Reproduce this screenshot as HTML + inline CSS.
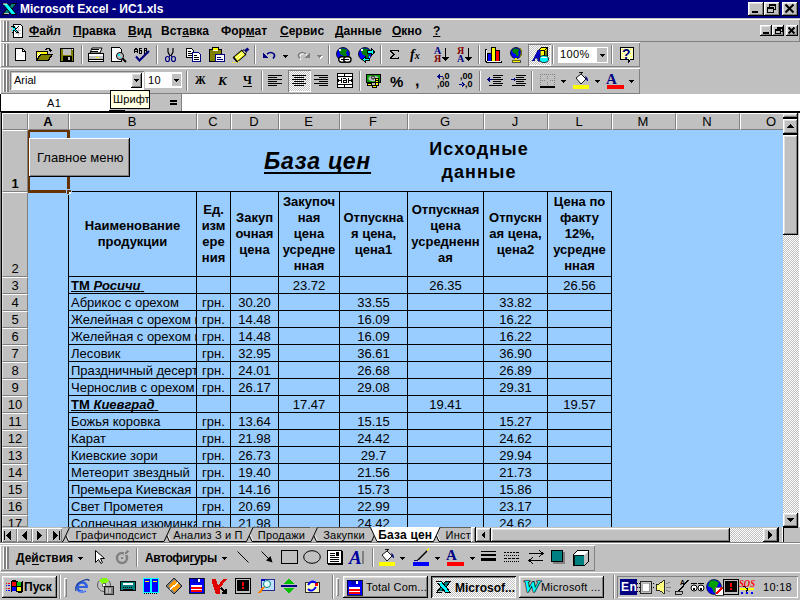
<!DOCTYPE html><html><head><meta charset="utf-8"><style>
*,*:before,*:after{margin:0;padding:0;box-sizing:border-box}
html,body{width:800px;height:600px;overflow:hidden;background:#c0c0c0;font-family:"Liberation Sans",sans-serif;position:relative}
div{position:absolute}
.t{white-space:nowrap;line-height:1;text-decoration-skip-ink:none}
.rb{background:#c0c0c0;box-shadow:inset -1px -1px #000,inset 1px 1px #fff,inset -2px -2px #808080,inset 2px 2px #dfdfdf}
.sk{box-shadow:inset 1px 1px #808080,inset -1px -1px #fff,inset 2px 2px #000,inset -2px -2px #dfdfdf}
.tb{box-shadow:inset 1px 1px #fff,inset -1px -1px #808080}
.grip{width:6px}.grip:before,.grip:after{content:"";position:absolute;top:0;bottom:0;width:3px;border-left:1px solid #fff;border-right:2px solid #808080}.grip:before{left:0}.grip:after{left:3px}
.sep{width:2px;border-left:1px solid #808080;border-right:1px solid #fff}
svg{position:absolute;overflow:visible}
</style></head><body>
<div style="left:0px;top:0px;width:800px;height:18px;background:#000080"></div>
<svg style="left:1px;top:2px" width="17" height="14" viewBox="0 0 17 14"><path d="M10.5 1.5H15.5L6.5 12.5H1.5Z" fill="#008080" stroke="#000"/><path d="M3 11.5H8" stroke="#c0c0c0"/><path d="M1.5 1.5H6.5L15.5 12.5H10.5Z" fill="#00ffff" stroke="#000"/><path d="M2 2H6" stroke="#fff"/></svg>
<div class="t" style="left:20px;top:3px;color:#fff;font-weight:bold;font-size:12px">Microsoft Excel - ИС1.xls</div>
<div class="rb" style="left:748px;top:2px;width:16px;height:14px;"></div>
<div style="left:752px;top:11px;width:6px;height:2px;background:#000"></div>
<div class="rb" style="left:764px;top:2px;width:16px;height:14px;"></div>
<div style="left:769px;top:4px;width:7px;height:6px;border:1px solid #000;border-top-width:2px"></div>
<div style="left:767px;top:7px;width:7px;height:6px;border:1px solid #000;border-top-width:2px;background:#c0c0c0"></div>
<div class="rb" style="left:782px;top:2px;width:16px;height:14px;"></div>
<svg style="left:785px;top:4px" width="9" height="9" viewBox="0 0 9 9"><path d="M0.5 0.5L8.5 8.5M8.5 0.5L0.5 8.5" stroke="#000" stroke-width="2"/></svg>
<div style="left:0px;top:18px;width:800px;height:1px;background:#c0c0c0"></div>
<div class="tb" style="left:0px;top:19px;width:800px;height:23px;"></div>
<div class="grip" style="left:3px;top:21px;width:6px;height:20px;"></div>
<svg style="left:11px;top:24px" width="13" height="14" viewBox="0 0 13 14" shape-rendering="crispEdges"><path d="M2.5 0.5h7l2 2v11h-9z" fill="#fff" stroke="#000"/><path d="M4 6h6M4 9h6M7 4v8" stroke="#c0c0c0"/><path d="M0 2h3l2 2 2-2h1l-3 4 3 3H5L3 7 1 9H0l3-3z" fill="#000"/><path d="M1 3l5 5M1 7l4-4" stroke="#00ffff"/></svg>
<div class="t" style="left:29px;top:25px;font-size:12px;font-weight:bold;color:#000"><u style="text-underline-offset:1px">Ф</u>айл</div>
<div class="t" style="left:73px;top:25px;font-size:12px;font-weight:bold;color:#000"><u style="text-underline-offset:1px">П</u>равка</div>
<div class="t" style="left:128px;top:25px;font-size:12px;font-weight:bold;color:#000"><u style="text-underline-offset:1px">В</u>ид</div>
<div class="t" style="left:161px;top:25px;font-size:12px;font-weight:bold;color:#000">Вст<u style="text-underline-offset:1px">а</u>вка</div>
<div class="t" style="left:221px;top:25px;font-size:12px;font-weight:bold;color:#000">Фор<u style="text-underline-offset:1px">м</u>ат</div>
<div class="t" style="left:280px;top:25px;font-size:12px;font-weight:bold;color:#000"><u style="text-underline-offset:1px">С</u>ервис</div>
<div class="t" style="left:335px;top:25px;font-size:12px;font-weight:bold;color:#000"><u style="text-underline-offset:1px">Д</u>анные</div>
<div class="t" style="left:392px;top:25px;font-size:12px;font-weight:bold;color:#000"><u style="text-underline-offset:1px">О</u>кно</div>
<div class="t" style="left:433px;top:25px;font-size:12px;font-weight:bold;color:#000"><u style="text-underline-offset:1px">?</u></div>
<div class="rb" style="left:760px;top:25px;width:12px;height:11px;"></div>
<div style="left:763px;top:32px;width:6px;height:2px;background:#000"></div>
<div class="rb" style="left:772px;top:25px;width:12px;height:11px;"></div>
<div style="left:777px;top:27px;width:6px;height:5px;border:1px solid #000;border-top-width:2px"></div>
<div style="left:775px;top:29px;width:6px;height:5px;border:1px solid #000;border-top-width:2px;background:#c0c0c0"></div>
<div class="rb" style="left:786px;top:25px;width:12px;height:11px;"></div>
<svg style="left:788px;top:27px" width="7" height="7" viewBox="0 0 7 7"><path d="M0.5 0.5L6.5 6.5M6.5 0.5L0.5 6.5" stroke="#000" stroke-width="2"/></svg>
<div class="tb" style="left:0px;top:42px;width:640px;height:25px;"></div>
<div class="grip" style="left:3px;top:44px;width:6px;height:22px;"></div>
<div class="tb" style="left:0px;top:68px;width:640px;height:26px;"></div>
<div class="grip" style="left:3px;top:70px;width:6px;height:22px;"></div>
<div style="left:81px;top:45px;width:1px;height:19px;background:#808080"></div>
<div style="left:82px;top:45px;width:1px;height:19px;background:#fff"></div>
<div style="left:156px;top:45px;width:1px;height:19px;background:#808080"></div>
<div style="left:157px;top:45px;width:1px;height:19px;background:#fff"></div>
<div style="left:254px;top:45px;width:1px;height:19px;background:#808080"></div>
<div style="left:255px;top:45px;width:1px;height:19px;background:#fff"></div>
<div style="left:328px;top:45px;width:1px;height:19px;background:#808080"></div>
<div style="left:329px;top:45px;width:1px;height:19px;background:#fff"></div>
<div style="left:380px;top:45px;width:1px;height:19px;background:#808080"></div>
<div style="left:381px;top:45px;width:1px;height:19px;background:#fff"></div>
<div style="left:478px;top:45px;width:1px;height:19px;background:#808080"></div>
<div style="left:479px;top:45px;width:1px;height:19px;background:#fff"></div>
<div style="left:552px;top:45px;width:1px;height:19px;background:#808080"></div>
<div style="left:553px;top:45px;width:1px;height:19px;background:#fff"></div>
<div style="left:611px;top:45px;width:1px;height:19px;background:#808080"></div>
<div style="left:612px;top:45px;width:1px;height:19px;background:#fff"></div>
<svg style="left:15px;top:48px;" width="11" height="13" viewBox="0 0 11 13" shape-rendering="crispEdges"><path d="M0.5 0.5H7.5L10.5 3.5V12.5H0.5Z" fill="#fff" stroke="#000"/><path d="M7.5 0.5V3.5H10.5" fill="none" stroke="#000"/></svg>
<svg style="left:36px;top:47px;" width="17" height="14" viewBox="0 0 17 14" shape-rendering="crispEdges"><path d="M9 3V2h1V1h3v1h1v1h1v1" fill="none" stroke="#000" stroke-width="1"/><path d="M13 3h3v1h-1v1h-1v-1h-1z" fill="#000"/><rect x="0" y="4" width="12" height="10" fill="#000"/><rect x="1" y="5" width="10" height="8" fill="#ffff00"/><path d="M2 6h1v1h-1zM4 6h1v1h-1zM1 7h1v1h-1zM3 7h1v1h-1zM2 8h1v1h-1zM1 9h1v1h-1z" fill="#fff"/><path d="M0 13L4 7H17L13 14H0Z" fill="#000"/><path d="M2 13L5 8H15L12 13Z" fill="#808000"/></svg>
<svg style="left:60px;top:48px;" width="15" height="14" viewBox="0 0 15 14" shape-rendering="crispEdges"><rect x="0" y="0" width="14" height="14" fill="#000"/><rect x="1" y="1" width="12" height="12" fill="#808000"/><rect x="3" y="1" width="8" height="6" fill="#c0c0c0"/><rect x="3" y="8" width="9" height="6" fill="#000"/><rect x="8" y="9" width="2" height="3" fill="#c0c0c0"/><rect x="12" y="1" width="1" height="1" fill="#fff"/></svg>
<svg style="left:88px;top:47px;" width="17" height="15" viewBox="0 0 17 15" shape-rendering="crispEdges"><path d="M4 1H14L12 6H2Z" fill="#fff" stroke="#000" stroke-width="1" shape-rendering="auto"/><rect x="4" y="2" width="7" height="1" fill="#000"/><rect x="3" y="4" width="7" height="1" fill="#000"/><rect x="0" y="6" width="16" height="9" rx="1" fill="#000"/><rect x="1" y="7" width="14" height="2" fill="#fff"/><rect x="1" y="9" width="14" height="3" fill="#c0c0c0"/><rect x="8" y="10" width="3" height="1" fill="#ffff00"/><rect x="1" y="13" width="14" height="1" fill="#fff"/></svg>
<svg style="left:111px;top:47px;" width="17" height="16" viewBox="0 0 17 16" shape-rendering="crispEdges"><path d="M0.5 0.5H8.5L10.5 2.5V14.5H0.5Z" fill="#fff" stroke="#000"/><circle cx="9" cy="9" r="3.5" fill="#c0c0c0" stroke="#000" shape-rendering="auto"/><rect x="7" y="7" width="2" height="2" fill="#00ffff"/><rect x="9" y="10" width="1" height="1" fill="#00ffff"/><path d="M11.5 11.5L15 15" stroke="#000" stroke-width="2" shape-rendering="auto"/></svg>
<svg style="left:134px;top:48px;" width="13" height="6" viewBox="0 0 13 6" shape-rendering="crispEdges"><path d="M0 5V1h1V0h1v1h1v4M0 3h3" fill="none" stroke="#000"/><path d="M5 0.5h3M5.5 0v5M5 2.5h2.5v2.5H5" fill="none" stroke="#000"/><path d="M10.5 0v5M10 0.5h2v2h-2M10 2.5h2.5v2.5H10" fill="none" stroke="#000"/></svg>
<svg style="left:135px;top:50px;" width="15" height="12" viewBox="0 0 15 12" shape-rendering="crispEdges"><path d="M1 6.5L4.5 10.5L14 1" fill="none" stroke="#000080" stroke-width="2.2" shape-rendering="auto"/></svg>
<svg style="left:165px;top:48px;" width="11" height="14" viewBox="0 0 11 14" shape-rendering="crispEdges"><path d="M3 0V4L5 8M8 0V4L6 8" fill="none" stroke="#000" stroke-width="1.2" shape-rendering="auto"/><ellipse cx="2.5" cy="11" rx="2" ry="2.5" fill="none" stroke="#000080" stroke-width="1.2" shape-rendering="auto"/><ellipse cx="8.5" cy="11" rx="2" ry="2.5" fill="none" stroke="#000080" stroke-width="1.2" shape-rendering="auto"/><path d="M4 9L5.5 7.5L7 9" stroke="#000080" fill="none"/></svg>
<svg style="left:186px;top:48px;" width="16" height="14" viewBox="0 0 16 14" shape-rendering="crispEdges"><path d="M0.5 0.5H5.5L7.5 2.5V9.5H0.5Z" fill="#fff" stroke="#000"/><rect x="2" y="3" width="3" height="1" fill="#000"/><rect x="2" y="5" width="4" height="1" fill="#000"/><rect x="2" y="7" width="4" height="1" fill="#000"/><path d="M6.5 4.5H12.5L14.5 6.5V13.5H6.5Z" fill="#fff" stroke="#000080"/><rect x="8" y="7" width="3" height="1" fill="#000"/><rect x="8" y="9" width="5" height="1" fill="#000"/><rect x="8" y="11" width="5" height="1" fill="#000"/></svg>
<svg style="left:209px;top:47px;" width="17" height="15" viewBox="0 0 17 15" shape-rendering="crispEdges"><rect x="0" y="2" width="13" height="13" fill="#000"/><rect x="1" y="3" width="11" height="11" fill="#808000"/><rect x="3" y="0" width="7" height="3" fill="#000"/><rect x="4" y="1" width="5" height="2" fill="#ffff00"/><rect x="4" y="3" width="5" height="1" fill="#fff"/><rect x="6" y="7" width="10" height="8" fill="#000080"/><rect x="7" y="8" width="8" height="6" fill="#fff"/><rect x="8" y="10" width="4" height="1" fill="#000080"/><rect x="8" y="12" width="6" height="1" fill="#000080"/></svg>
<svg style="left:232px;top:47px;" width="17" height="16" viewBox="0 0 17 16" shape-rendering="crispEdges"><g transform="rotate(-40 8 8)" shape-rendering="auto"><rect x="1.5" y="5.5" width="11" height="6" fill="#ffff00" stroke="#000"/><path d="M2 7.5H12M2 9.5H12" stroke="#fff" stroke-width="0.9"/><rect x="12.5" y="6.5" width="2" height="4" fill="#c0c0c0" stroke="#000" stroke-width="0.8"/><rect x="14.5" y="7" width="4" height="3" fill="#000080"/><path d="M1.5 5.5V11.5" stroke="#000" stroke-width="1.6"/></g><path d="M0 15h1M2 15h1M4 15h1M6 14h1" stroke="#ffff00"/></svg>
<svg style="left:263px;top:51px;" width="13" height="8" viewBox="0 0 13 8" shape-rendering="crispEdges"><path d="M4 3Q8 0 11 3Q12.5 5 10 7.5" fill="none" stroke="#000080" stroke-width="1.6" shape-rendering="auto"/><path d="M0 1V7H5Z" fill="#000080"/></svg>
<svg style="left:283px;top:55px;" width="5" height="3" viewBox="0 0 5 3" shape-rendering="crispEdges"><path d="M0 0h5v1h-1v1h-1v1h-1v-1h-1v-1h-1z" fill="#000"/></svg>
<svg style="left:297px;top:51px;" width="14" height="8" viewBox="0 0 14 8" shape-rendering="crispEdges"><path d="M9 3Q5 0 2 3Q0.5 5 3 7.5" fill="none" stroke="#fff" stroke-width="1.6" shape-rendering="auto" transform="translate(1,1)"/><path d="M9 3Q5 0 2 3Q0.5 5 3 7.5" fill="none" stroke="#808080" stroke-width="1.6" shape-rendering="auto"/><path d="M13 1V7H8Z" fill="#808080"/></svg>
<svg style="left:318px;top:56px;" width="5" height="3" viewBox="0 0 5 3" shape-rendering="crispEdges"><path d="M0 0h5v1h-1v1h-1v1h-1v-1h-1v-1h-1z" fill="#fff"/></svg>
<svg style="left:317px;top:55px;" width="5" height="3" viewBox="0 0 5 3" shape-rendering="crispEdges"><path d="M0 0h5v1h-1v1h-1v1h-1v-1h-1v-1h-1z" fill="#808080"/></svg>
<svg style="left:336px;top:47px;" width="14" height="14" viewBox="0 0 14 14" shape-rendering="crispEdges"><circle cx="7" cy="7" r="6.5" fill="#0000ff" stroke="#000" stroke-width="0.8" shape-rendering="auto"/><path d="M5 1.5Q10 1 11.5 3.5L10 5.5L11 8.5L9 12L7 8.5L4.5 7.5L3 4Z" fill="#008000" shape-rendering="auto"/><rect x="3" y="2" width="2" height="2" fill="#fff"/><rect x="11" y="9" width="1" height="2" fill="#00ffff"/></svg>
<svg style="left:338px;top:56px;" width="14" height="7" viewBox="0 0 14 7" shape-rendering="crispEdges"><rect x="0.7" y="0.7" width="7.3" height="5.6" rx="2.8" fill="#fff" stroke="#000" stroke-width="1.4" shape-rendering="auto"/><rect x="5.7" y="0.7" width="7.3" height="5.6" rx="2.8" fill="#fff" stroke="#000" stroke-width="1.4" shape-rendering="auto"/><rect x="3" y="3" width="8" height="1" fill="#000"/></svg>
<svg style="left:358px;top:47px;" width="14" height="14" viewBox="0 0 14 14" shape-rendering="crispEdges"><circle cx="7" cy="7" r="6.5" fill="#0000ff" stroke="#000" stroke-width="0.8" shape-rendering="auto"/><path d="M5 1.5Q10 1 11.5 3.5L10 5.5L11 8.5L9 12L7 8.5L4.5 7.5L3 4Z" fill="#008000" shape-rendering="auto"/><rect x="3" y="2" width="2" height="2" fill="#fff"/><rect x="11" y="9" width="1" height="2" fill="#00ffff"/></svg>
<svg style="left:362px;top:48px;" width="13" height="15" viewBox="0 0 13 15" shape-rendering="crispEdges"><path d="M5.5 2.5H9.5V0.5L12.5 4L9.5 7.5V5.5H5.5Z" fill="#00ffff" stroke="#000" stroke-width="1"/><path d="M7.5 10.5H3.5V8.5L0.5 11.5L3.5 14.5V12.5H7.5Z" fill="#00ffff" stroke="#000" stroke-width="1"/></svg>
<svg style="left:390px;top:50px;" width="10" height="9" viewBox="0 0 10 9" shape-rendering="crispEdges"><path d="M0 0H9V2H8V1H2L5 4.5L2 8H8V7H9V9H0V8L3 4.5L0 1Z" fill="#000"/></svg>
<div class="t" style="left:410px;top:48px;font-family:'Liberation Serif',serif;font-size:14px;font-weight:bold;font-style:italic">f<span style="font-size:10px">x</span></div>
<div class="t" style="left:434px;top:47px;font-family:'Liberation Serif',serif;font-size:10px;font-weight:bold;line-height:7px;color:#000080">А</div>
<div class="t" style="left:434px;top:55px;font-family:'Liberation Serif',serif;font-size:10px;font-weight:bold;line-height:7px;color:#800000">Я</div>
<svg style="left:442px;top:48px;" width="7" height="14" viewBox="0 0 7 14" shape-rendering="crispEdges"><rect x="3" y="0" width="1" height="10" fill="#000"/><path d="M0 9H7L3.5 13Z" fill="#000"/></svg>
<div class="t" style="left:457px;top:47px;font-family:'Liberation Serif',serif;font-size:10px;font-weight:bold;line-height:7px;color:#800000">Я</div>
<div class="t" style="left:457px;top:55px;font-family:'Liberation Serif',serif;font-size:10px;font-weight:bold;line-height:7px;color:#000080">А</div>
<svg style="left:465px;top:48px;" width="7" height="14" viewBox="0 0 7 14" shape-rendering="crispEdges"><rect x="3" y="0" width="1" height="10" fill="#000"/><path d="M0 9H7L3.5 13Z" fill="#000"/></svg>
<svg style="left:485px;top:47px;" width="17" height="16" viewBox="0 0 17 16" shape-rendering="crispEdges"><path d="M0 2h1v1H0zM0 4h1v1H0z" fill="#000"/><rect x="0" y="2" width="2" height="13" fill="#000"/><rect x="1" y="3" width="1" height="11" fill="#fff"/><rect x="2" y="6" width="5" height="8" fill="#000"/><rect x="3" y="7" width="3" height="7" fill="#0000ff"/><rect x="6" y="0" width="5" height="14" fill="#000"/><rect x="7" y="1" width="3" height="13" fill="#ffff00"/><rect x="10" y="3" width="5" height="11" fill="#000"/><rect x="11" y="4" width="3" height="10" fill="#ff0000"/><rect x="1" y="14" width="16" height="2" fill="#000"/><rect x="2" y="14" width="14" height="1" fill="#fff"/></svg>
<svg style="left:509px;top:47px;" width="15" height="16" viewBox="0 0 15 16" shape-rendering="crispEdges"><circle cx="7" cy="6" r="5.5" fill="#0000ff" stroke="#000" stroke-width="0.8" shape-rendering="auto"/><path d="M5 1.5Q9 1 10.5 3L9 5L10 7.5L8 10L6.5 7L4 6L3 3.5Z" fill="#008000" shape-rendering="auto"/><path d="M11 1Q14 5 11 10" fill="none" stroke="#808000" stroke-width="1.2" shape-rendering="auto"/><rect x="6" y="11" width="2" height="2" fill="#ffff00"/><rect x="3" y="13" width="8" height="2" fill="#ffff00" stroke="#000" stroke-width="0.6"/></svg>
<div style="left:528px;top:44px;width:23px;height:22px;background-color:#fff;background-image:linear-gradient(45deg,#c0c0c0 25%,transparent 25%,transparent 75%,#c0c0c0 75%),linear-gradient(45deg,#c0c0c0 25%,transparent 25%,transparent 75%,#c0c0c0 75%);background-size:2px 2px;background-position:0 0,1px 1px;box-shadow:inset 1px 1px #808080,inset -1px -1px #fff"></div>
<svg style="left:532px;top:47px;" width="17" height="16" viewBox="0 0 17 16" shape-rendering="crispEdges"><path d="M6.5 3.5L9.5 0.5H15.5V8.5L12.5 11.5H6.5Z" fill="#ffff00" stroke="#000"/><path d="M6.5 3.5H12.5V11.5M12.5 3.5L15.5 0.5" fill="none" stroke="#000"/><path d="M13 4L15 2V8L13 10Z" fill="#808000"/><path d="M0.5 13.5L6 3H8.5L8 14H5.5L5.7 11H3.5L2.5 13.5Z" fill="#0000c0" stroke="#000080" stroke-width="0.6"/><ellipse cx="12" cy="12" rx="4.5" ry="3.5" fill="#00ffff" stroke="#000" stroke-width="0.8" shape-rendering="auto"/><path d="M9 11Q12 9 15 11" stroke="#fff" fill="none"/></svg>
<div style="left:557px;top:46px;width:51px;height:18px;background:#c0c0c0"></div>
<div style="left:558px;top:47px;width:50px;height:16px;background:#fff"></div>
<div class="t" style="left:560px;top:49px;font-size:11px;letter-spacing:0.4px">100%</div>
<div style="left:597px;top:48px;width:10px;height:14px;background:#c0c0c0"></div>
<svg style="left:600px;top:54px;" width="5" height="3" viewBox="0 0 5 3" shape-rendering="crispEdges"><path d="M0 0h5v1h-1v1h-1v1h-1v-1h-1v-1h-1z" fill="#000"/></svg>
<svg style="left:620px;top:47px;" width="14" height="16" viewBox="0 0 14 16" shape-rendering="crispEdges"><path d="M0.5 0.5H13.5V12.5H10.5L8.5 15V12.5H0.5Z" fill="#ffffc0" stroke="#000"/><path d="M2 2h1M6 2h1M10 2h1M4 4h1M2 6h1M10 6h1M2 10h1M11 9h1" stroke="#ffff00"/><path d="M1 1h1v1H1zM3 1h1v1H3z" fill="#fff"/></svg>
<div class="t" style="left:622px;top:47px;font-family:'Liberation Sans',sans-serif;font-size:14px;font-weight:bold;color:#000080">?</div>
<div style="left:10px;top:71px;width:134px;height:19px;background:#fff;box-shadow:inset 1px 1px #808080,inset -1px -1px #fff, inset 2px 2px #c0c0c0"></div>
<div class="t" style="left:14px;top:75px;font-size:11px">Arial</div>
<div class="rb" style="left:131px;top:73px;width:11px;height:15px;"></div>
<svg style="left:134px;top:79px;" width="5" height="3" viewBox="0 0 5 3" shape-rendering="crispEdges"><path d="M0 0h5v1h-1v1h-1v1h-1v-1h-1v-1h-1z" fill="#000"/></svg>
<div style="left:145px;top:72px;width:37px;height:16px;background:#fff"></div>
<div class="t" style="left:148px;top:75px;font-size:11px;letter-spacing:0.5px">10</div>
<div style="left:172px;top:74px;width:9px;height:12px;background:#c0c0c0"></div>
<svg style="left:174px;top:79px;" width="5" height="3" viewBox="0 0 5 3" shape-rendering="crispEdges"><path d="M0 0h5v1h-1v1h-1v1h-1v-1h-1v-1h-1z" fill="#000"/></svg>
<div style="left:186px;top:71px;width:1px;height:20px;background:#808080"></div>
<div style="left:187px;top:71px;width:1px;height:20px;background:#fff"></div>
<div style="left:261px;top:71px;width:1px;height:20px;background:#808080"></div>
<div style="left:262px;top:71px;width:1px;height:20px;background:#fff"></div>
<div style="left:359px;top:71px;width:1px;height:20px;background:#808080"></div>
<div style="left:360px;top:71px;width:1px;height:20px;background:#fff"></div>
<div style="left:479px;top:71px;width:1px;height:20px;background:#808080"></div>
<div style="left:480px;top:71px;width:1px;height:20px;background:#fff"></div>
<div style="left:531px;top:71px;width:1px;height:20px;background:#808080"></div>
<div style="left:532px;top:71px;width:1px;height:20px;background:#fff"></div>
<div class="t" style="left:195px;top:74px;font-family:'Liberation Serif',serif;font-size:12px;font-weight:bold;transform:scaleX(0.9);transform-origin:left">Ж</div>
<div class="t" style="left:218px;top:74px;font-family:'Liberation Serif',serif;font-size:13px;font-weight:bold;font-style:italic">К</div>
<div class="t" style="left:243px;top:74px;font-family:'Liberation Serif',serif;font-size:12px;font-weight:bold">Ч</div>
<div style="left:243px;top:86px;width:9px;height:1px;background:#000"></div>
<svg style="left:268px;top:75px;" width="15" height="11" viewBox="0 0 15 11" shape-rendering="crispEdges"><rect x="0" y="0" width="14" height="1" fill="#000"/><rect x="0" y="2" width="9" height="1" fill="#000"/><rect x="0" y="4" width="14" height="1" fill="#000"/><rect x="0" y="6" width="9" height="1" fill="#000"/><rect x="0" y="8" width="14" height="1" fill="#000"/><rect x="0" y="10" width="9" height="1" fill="#000"/></svg>
<div style="left:288px;top:70px;width:23px;height:22px;background-color:#fff;background-image:linear-gradient(45deg,#c0c0c0 25%,transparent 25%,transparent 75%,#c0c0c0 75%),linear-gradient(45deg,#c0c0c0 25%,transparent 25%,transparent 75%,#c0c0c0 75%);background-size:2px 2px;background-position:0 0,1px 1px;box-shadow:inset 1px 1px #808080,inset -1px -1px #fff"></div>
<svg style="left:292px;top:75px;" width="15" height="11" viewBox="0 0 15 11" shape-rendering="crispEdges"><rect x="0" y="0" width="14" height="1" fill="#000"/><rect x="2" y="2" width="10" height="1" fill="#000"/><rect x="0" y="4" width="14" height="1" fill="#000"/><rect x="2" y="6" width="10" height="1" fill="#000"/><rect x="0" y="8" width="14" height="1" fill="#000"/><rect x="2" y="10" width="10" height="1" fill="#000"/></svg>
<svg style="left:314px;top:75px;" width="15" height="11" viewBox="0 0 15 11" shape-rendering="crispEdges"><rect x="0" y="0" width="14" height="1" fill="#000"/><rect x="5" y="2" width="9" height="1" fill="#000"/><rect x="0" y="4" width="14" height="1" fill="#000"/><rect x="5" y="6" width="9" height="1" fill="#000"/><rect x="0" y="8" width="14" height="1" fill="#000"/><rect x="5" y="10" width="9" height="1" fill="#000"/></svg>
<svg style="left:337px;top:73px;" width="16" height="15" viewBox="0 0 16 15" shape-rendering="crispEdges"><rect x="0" y="0" width="16" height="15" fill="#000"/><rect x="1" y="1" width="6" height="2" fill="#fff"/><rect x="8" y="1" width="7" height="2" fill="#fff"/><rect x="1" y="4" width="14" height="7" fill="#fff"/><rect x="1" y="12" width="6" height="2" fill="#fff"/><rect x="8" y="12" width="7" height="2" fill="#fff"/><rect x="1" y="6" width="1" height="3" fill="#000"/><rect x="1" y="7" width="3" height="1" fill="#000"/><rect x="4" y="5" width="1" height="5" fill="#000"/><rect x="6" y="5" width="3" height="1" fill="#000"/><rect x="9" y="6" width="1" height="4" fill="#000"/><rect x="6" y="7" width="3" height="1" fill="#000"/><rect x="6" y="8" width="1" height="1" fill="#000"/><rect x="6" y="9" width="3" height="1" fill="#000"/><rect x="11" y="5" width="1" height="5" fill="#000"/><rect x="12" y="7" width="3" height="1" fill="#000"/><rect x="14" y="6" width="1" height="3" fill="#000"/></svg>
<svg style="left:366px;top:74px;" width="16" height="14" viewBox="0 0 16 14" shape-rendering="crispEdges"><rect x="0" y="0" width="15" height="9" fill="#000"/><rect x="1" y="1" width="13" height="7" fill="#00a000"/><ellipse cx="7.5" cy="4.5" rx="5" ry="2.8" fill="#c0c0c0" shape-rendering="auto"/><circle cx="7" cy="3.5" r="1.6" fill="none" stroke="#000" stroke-width="0.9" shape-rendering="auto"/><rect x="9" y="4" width="4" height="8" fill="#000"/><rect x="10" y="5" width="2" height="1" fill="#ffff00"/><rect x="10" y="7" width="2" height="1" fill="#ffff00"/><rect x="10" y="9" width="2" height="2" fill="#ffff00"/><rect x="1" y="9" width="5" height="3" rx="1.5" fill="#000"/><rect x="2" y="10" width="3" height="1" fill="#ffff00"/><rect x="6" y="11" width="5" height="3" rx="1.5" fill="#000"/><rect x="7" y="12" width="3" height="1" fill="#ffff00"/></svg>
<div class="t" style="left:390px;top:74px;font-size:15px;font-weight:bold">%</div>
<div class="t" style="left:415px;top:73px;font-size:16px;font-weight:bold">,</div>
<div class="t" style="left:442px;top:72px;font-size:9px;font-weight:bold;letter-spacing:0px">,0</div>
<div class="t" style="left:437px;top:80px;font-size:9px;font-weight:bold;letter-spacing:0px">,00</div>
<svg style="left:437px;top:74px;" width="6" height="5" viewBox="0 0 6 5" shape-rendering="crispEdges"><path d="M0 2.5L3 0V5Z M2 2H6V3H2Z" fill="#000080"/></svg>
<div class="t" style="left:460px;top:72px;font-size:9px;font-weight:bold;letter-spacing:0px">,00</div>
<div class="t" style="left:465px;top:80px;font-size:9px;font-weight:bold;letter-spacing:0px">,0</div>
<svg style="left:459px;top:82px;" width="6" height="5" viewBox="0 0 6 5" shape-rendering="crispEdges"><path d="M6 2.5L3 0V5Z M0 2H4V3H0Z" fill="#000080"/></svg>
<svg style="left:487px;top:74px;" width="17" height="13" viewBox="0 0 17 13" shape-rendering="crispEdges"><rect x="6" y="1" width="10" height="1" fill="#000"/><rect x="6" y="3" width="8" height="1" fill="#000"/><rect x="6" y="5" width="10" height="1" fill="#000"/><rect x="6" y="7" width="8" height="1" fill="#000"/><rect x="6" y="9" width="10" height="1" fill="#000"/><rect x="2" y="11" width="13" height="1" fill="#000"/><path d="M6 5H3V3L0 5.5L3 8V6H6Z" fill="#000080"/></svg>
<svg style="left:510px;top:74px;" width="17" height="13" viewBox="0 0 17 13" shape-rendering="crispEdges"><rect x="6" y="1" width="10" height="1" fill="#000"/><rect x="6" y="3" width="8" height="1" fill="#000"/><rect x="6" y="5" width="10" height="1" fill="#000"/><rect x="6" y="7" width="8" height="1" fill="#000"/><rect x="6" y="9" width="10" height="1" fill="#000"/><rect x="2" y="11" width="13" height="1" fill="#000"/><path d="M1 5H4V3L6 5.5L4 8V6H1Z" fill="#000080"/></svg>
<svg style="left:540px;top:74px;" width="15" height="14" viewBox="0 0 15 14" shape-rendering="crispEdges"><path d="M0 0h1v1H0zM2 0h1v1H2zM4 0h1v1H4zM6 0h1v1H6zM8 0h1v1H8zM10 0h1v1h-1zM12 0h1v1h-1zM14 0h1v1h-1zM0 2h1v1H0zM0 4h1v1H0zM0 6h1v1H0zM0 8h1v1H0zM0 10h1v1H0zM14 2h1v1h-1zM14 4h1v1h-1zM14 6h1v1h-1zM14 8h1v1h-1zM14 10h1v1h-1zM7 2h1v1H7zM7 4h1v1H7zM7 8h1v1H7zM7 10h1v1H7zM2 6h1v1H2zM4 6h1v1H4zM10 6h1v1h-1zM12 6h1v1h-1z" fill="#808080"/><rect x="0" y="12" width="15" height="2" fill="#000"/></svg>
<svg style="left:561px;top:80px;" width="5" height="3" viewBox="0 0 5 3" shape-rendering="crispEdges"><path d="M0 0h5v1h-1v1h-1v1h-1v-1h-1v-1h-1z" fill="#000"/></svg>
<svg style="left:573px;top:72px;" width="17" height="18" viewBox="0 0 17 18" shape-rendering="crispEdges"><path d="M3 6L8 2L13 7L8 12Z" fill="#fff" stroke="#000" stroke-width="0.9" shape-rendering="auto"/><path d="M8 2V0M6 1Q8 -1 10 1" fill="none" stroke="#000" stroke-width="0.9"/><path d="M12 4Q15 5 15 9L14 9L13 7Z" fill="#000080" shape-rendering="auto"/><rect x="0" y="13" width="16" height="4" fill="#ffff00"/></svg>
<svg style="left:595px;top:80px;" width="5" height="3" viewBox="0 0 5 3" shape-rendering="crispEdges"><path d="M0 0h5v1h-1v1h-1v1h-1v-1h-1v-1h-1z" fill="#000"/></svg>
<div class="t" style="left:606px;top:72px;font-family:'Liberation Serif',serif;font-size:15px;font-weight:bold;color:#000080">A</div>
<div style="left:607px;top:85px;width:17px;height:4px;background:#ff0000"></div>
<svg style="left:629px;top:80px;" width="5" height="3" viewBox="0 0 5 3" shape-rendering="crispEdges"><path d="M0 0h5v1h-1v1h-1v1h-1v-1h-1v-1h-1z" fill="#000"/></svg>
<div style="left:0px;top:94px;width:800px;height:18px;background:#c0c0c0"></div>
<div style="left:0px;top:94px;width:110px;height:18px;background:#fff;border-left:1px solid #000"></div>
<div class="t" style="left:47px;top:98px;font-size:11px;letter-spacing:0.5px">A1</div>
<div style="left:181px;top:94px;width:619px;height:18px;background:#fff;border-left:1px solid #808080"></div>
<div style="left:170px;top:100px;width:7px;height:2px;background:#000"></div>
<div style="left:170px;top:103px;width:7px;height:2px;background:#000"></div>
<div style="left:0px;top:111px;width:800px;height:2px;background:#000"></div>
<div style="left:0px;top:112px;width:1px;height:416px;background:#808080"></div>
<div style="left:1px;top:112px;width:1px;height:416px;background:#000"></div>
<div style="left:2px;top:113px;width:781px;height:17px;background:#c0c0c0"></div>
<div style="left:2px;top:113px;width:26px;height:17px;border-top:1px solid #fff;border-left:1px solid #fff;border-right:1px solid #808080;border-bottom:1px solid #808080"></div>
<div style="left:0;top:113px;width:783px;height:17px;overflow:hidden">
<div style="left:28px;top:0px;width:41px;height:17px;border-top:1px solid #fff;border-left:1px solid #fff;border-right:1px solid #808080;border-bottom:1px solid #808080"></div>
<div class="t" style="left:28px;top:2px;width:40px;text-align:center;font-size:13px;font-weight:bold">A</div>
<div style="left:69px;top:0px;width:128px;height:17px;border-top:1px solid #fff;border-left:1px solid #fff;border-right:1px solid #808080;border-bottom:1px solid #808080"></div>
<div class="t" style="left:68px;top:2px;width:128px;text-align:center;font-size:13px;font-weight:normal">B</div>
<div style="left:197px;top:0px;width:34px;height:17px;border-top:1px solid #fff;border-left:1px solid #fff;border-right:1px solid #808080;border-bottom:1px solid #808080"></div>
<div class="t" style="left:196px;top:2px;width:34px;text-align:center;font-size:13px;font-weight:normal">C</div>
<div style="left:231px;top:0px;width:48px;height:17px;border-top:1px solid #fff;border-left:1px solid #fff;border-right:1px solid #808080;border-bottom:1px solid #808080"></div>
<div class="t" style="left:230px;top:2px;width:48px;text-align:center;font-size:13px;font-weight:normal">D</div>
<div style="left:279px;top:0px;width:61px;height:17px;border-top:1px solid #fff;border-left:1px solid #fff;border-right:1px solid #808080;border-bottom:1px solid #808080"></div>
<div class="t" style="left:278px;top:2px;width:61px;text-align:center;font-size:13px;font-weight:normal">E</div>
<div style="left:340px;top:0px;width:68px;height:17px;border-top:1px solid #fff;border-left:1px solid #fff;border-right:1px solid #808080;border-bottom:1px solid #808080"></div>
<div class="t" style="left:339px;top:2px;width:68px;text-align:center;font-size:13px;font-weight:normal">F</div>
<div style="left:408px;top:0px;width:76px;height:17px;border-top:1px solid #fff;border-left:1px solid #fff;border-right:1px solid #808080;border-bottom:1px solid #808080"></div>
<div class="t" style="left:407px;top:2px;width:76px;text-align:center;font-size:13px;font-weight:normal">G</div>
<div style="left:484px;top:0px;width:64px;height:17px;border-top:1px solid #fff;border-left:1px solid #fff;border-right:1px solid #808080;border-bottom:1px solid #808080"></div>
<div class="t" style="left:483px;top:2px;width:64px;text-align:center;font-size:13px;font-weight:normal">J</div>
<div style="left:548px;top:0px;width:64px;height:17px;border-top:1px solid #fff;border-left:1px solid #fff;border-right:1px solid #808080;border-bottom:1px solid #808080"></div>
<div class="t" style="left:547px;top:2px;width:64px;text-align:center;font-size:13px;font-weight:normal">L</div>
<div style="left:612px;top:0px;width:64px;height:17px;border-top:1px solid #fff;border-left:1px solid #fff;border-right:1px solid #808080;border-bottom:1px solid #808080"></div>
<div class="t" style="left:611px;top:2px;width:64px;text-align:center;font-size:13px;font-weight:normal">M</div>
<div style="left:676px;top:0px;width:64px;height:17px;border-top:1px solid #fff;border-left:1px solid #fff;border-right:1px solid #808080;border-bottom:1px solid #808080"></div>
<div class="t" style="left:675px;top:2px;width:64px;text-align:center;font-size:13px;font-weight:normal">N</div>
<div style="left:740px;top:0px;width:64px;height:17px;border-top:1px solid #fff;border-left:1px solid #fff;border-right:1px solid #808080;border-bottom:1px solid #808080"></div>
<div class="t" style="left:739px;top:2px;width:64px;text-align:center;font-size:13px;font-weight:normal">O</div>
</div>
<div style="left:28px;top:130px;width:755px;height:397px;background:#99ccff"></div>
<div style="left:2px;top:130px;width:26px;height:62px;background:#c0c0c0;border-top:1px solid #fff;border-left:1px solid #dfdfdf;border-right:1px solid #808080;border-bottom:1px solid #808080"></div>
<div class="t" style="left:2px;top:177px;width:26px;text-align:center;font-size:13px;font-weight:bold">1</div>
<div style="left:2px;top:192px;width:26px;height:85px;background:#c0c0c0;border-top:1px solid #fff;border-left:1px solid #dfdfdf;border-right:1px solid #808080;border-bottom:1px solid #808080"></div>
<div class="t" style="left:2px;top:262px;width:26px;text-align:center;font-size:13px;font-weight:normal">2</div>
<div style="left:2px;top:277px;width:26px;height:17px;background:#c0c0c0;border-top:1px solid #fff;border-left:1px solid #dfdfdf;border-right:1px solid #808080;border-bottom:1px solid #808080"></div>
<div class="t" style="left:2px;top:279px;width:26px;text-align:center;font-size:13px;font-weight:normal">3</div>
<div style="left:2px;top:294px;width:26px;height:17px;background:#c0c0c0;border-top:1px solid #fff;border-left:1px solid #dfdfdf;border-right:1px solid #808080;border-bottom:1px solid #808080"></div>
<div class="t" style="left:2px;top:296px;width:26px;text-align:center;font-size:13px;font-weight:normal">4</div>
<div style="left:2px;top:311px;width:26px;height:17px;background:#c0c0c0;border-top:1px solid #fff;border-left:1px solid #dfdfdf;border-right:1px solid #808080;border-bottom:1px solid #808080"></div>
<div class="t" style="left:2px;top:313px;width:26px;text-align:center;font-size:13px;font-weight:normal">5</div>
<div style="left:2px;top:328px;width:26px;height:17px;background:#c0c0c0;border-top:1px solid #fff;border-left:1px solid #dfdfdf;border-right:1px solid #808080;border-bottom:1px solid #808080"></div>
<div class="t" style="left:2px;top:330px;width:26px;text-align:center;font-size:13px;font-weight:normal">6</div>
<div style="left:2px;top:345px;width:26px;height:17px;background:#c0c0c0;border-top:1px solid #fff;border-left:1px solid #dfdfdf;border-right:1px solid #808080;border-bottom:1px solid #808080"></div>
<div class="t" style="left:2px;top:347px;width:26px;text-align:center;font-size:13px;font-weight:normal">7</div>
<div style="left:2px;top:362px;width:26px;height:17px;background:#c0c0c0;border-top:1px solid #fff;border-left:1px solid #dfdfdf;border-right:1px solid #808080;border-bottom:1px solid #808080"></div>
<div class="t" style="left:2px;top:364px;width:26px;text-align:center;font-size:13px;font-weight:normal">8</div>
<div style="left:2px;top:379px;width:26px;height:17px;background:#c0c0c0;border-top:1px solid #fff;border-left:1px solid #dfdfdf;border-right:1px solid #808080;border-bottom:1px solid #808080"></div>
<div class="t" style="left:2px;top:381px;width:26px;text-align:center;font-size:13px;font-weight:normal">9</div>
<div style="left:2px;top:396px;width:26px;height:17px;background:#c0c0c0;border-top:1px solid #fff;border-left:1px solid #dfdfdf;border-right:1px solid #808080;border-bottom:1px solid #808080"></div>
<div class="t" style="left:2px;top:398px;width:26px;text-align:center;font-size:13px;font-weight:normal">10</div>
<div style="left:2px;top:413px;width:26px;height:17px;background:#c0c0c0;border-top:1px solid #fff;border-left:1px solid #dfdfdf;border-right:1px solid #808080;border-bottom:1px solid #808080"></div>
<div class="t" style="left:2px;top:415px;width:26px;text-align:center;font-size:13px;font-weight:normal">11</div>
<div style="left:2px;top:430px;width:26px;height:17px;background:#c0c0c0;border-top:1px solid #fff;border-left:1px solid #dfdfdf;border-right:1px solid #808080;border-bottom:1px solid #808080"></div>
<div class="t" style="left:2px;top:432px;width:26px;text-align:center;font-size:13px;font-weight:normal">12</div>
<div style="left:2px;top:447px;width:26px;height:17px;background:#c0c0c0;border-top:1px solid #fff;border-left:1px solid #dfdfdf;border-right:1px solid #808080;border-bottom:1px solid #808080"></div>
<div class="t" style="left:2px;top:449px;width:26px;text-align:center;font-size:13px;font-weight:normal">13</div>
<div style="left:2px;top:464px;width:26px;height:17px;background:#c0c0c0;border-top:1px solid #fff;border-left:1px solid #dfdfdf;border-right:1px solid #808080;border-bottom:1px solid #808080"></div>
<div class="t" style="left:2px;top:466px;width:26px;text-align:center;font-size:13px;font-weight:normal">14</div>
<div style="left:2px;top:481px;width:26px;height:17px;background:#c0c0c0;border-top:1px solid #fff;border-left:1px solid #dfdfdf;border-right:1px solid #808080;border-bottom:1px solid #808080"></div>
<div class="t" style="left:2px;top:483px;width:26px;text-align:center;font-size:13px;font-weight:normal">15</div>
<div style="left:2px;top:498px;width:26px;height:17px;background:#c0c0c0;border-top:1px solid #fff;border-left:1px solid #dfdfdf;border-right:1px solid #808080;border-bottom:1px solid #808080"></div>
<div class="t" style="left:2px;top:500px;width:26px;text-align:center;font-size:13px;font-weight:normal">16</div>
<div style="left:2px;top:515px;width:26px;height:12px;background:#c0c0c0;border-top:1px solid #fff;border-left:1px solid #dfdfdf;border-right:1px solid #808080;border-bottom:1px solid #808080"></div>
<div class="t" style="left:2px;top:517px;width:26px;text-align:center;font-size:13px;font-weight:normal">17</div>
<div style="left:2px;top:527px;width:26px;height:1px;background:#c0c0c0"></div>
<div style="left:0;top:0;width:783px;height:527px;overflow:hidden">
<div style="left:68px;top:191px;width:1px;height:340px;background:#000"></div>
<div style="left:196px;top:191px;width:1px;height:340px;background:#000"></div>
<div style="left:230px;top:191px;width:1px;height:340px;background:#000"></div>
<div style="left:278px;top:191px;width:1px;height:340px;background:#000"></div>
<div style="left:339px;top:191px;width:1px;height:340px;background:#000"></div>
<div style="left:407px;top:191px;width:1px;height:340px;background:#000"></div>
<div style="left:483px;top:191px;width:1px;height:340px;background:#000"></div>
<div style="left:547px;top:191px;width:1px;height:340px;background:#000"></div>
<div style="left:611px;top:191px;width:1px;height:340px;background:#000"></div>
<div style="left:68px;top:191px;width:544px;height:1px;background:#000"></div>
<div style="left:68px;top:276px;width:544px;height:1px;background:#000"></div>
<div style="left:68px;top:293px;width:544px;height:1px;background:#000"></div>
<div style="left:68px;top:310px;width:544px;height:1px;background:#000"></div>
<div style="left:68px;top:327px;width:544px;height:1px;background:#000"></div>
<div style="left:68px;top:344px;width:544px;height:1px;background:#000"></div>
<div style="left:68px;top:361px;width:544px;height:1px;background:#000"></div>
<div style="left:68px;top:378px;width:544px;height:1px;background:#000"></div>
<div style="left:68px;top:395px;width:544px;height:1px;background:#000"></div>
<div style="left:68px;top:412px;width:544px;height:1px;background:#000"></div>
<div style="left:68px;top:429px;width:544px;height:1px;background:#000"></div>
<div style="left:68px;top:446px;width:544px;height:1px;background:#000"></div>
<div style="left:68px;top:463px;width:544px;height:1px;background:#000"></div>
<div style="left:68px;top:480px;width:544px;height:1px;background:#000"></div>
<div style="left:68px;top:497px;width:544px;height:1px;background:#000"></div>
<div style="left:68px;top:514px;width:544px;height:1px;background:#000"></div>
<div class="t" style="left:264px;top:150px;font-size:23px;font-weight:bold;font-style:italic;letter-spacing:0.8px;text-decoration:underline;text-decoration-thickness:2px;text-underline-offset:3px;text-decoration-skip-ink:none">База цен</div>
<div style="left:399px;top:138px;width:160px;text-align:center;font-size:18px;font-weight:bold;line-height:23px;letter-spacing:1.1px">Исходные<br>данные</div>
<div style="left:69px;top:218px;width:127px;text-align:center;font-size:13px;font-weight:bold;line-height:16px;white-space:nowrap">Наименование<br>продукции</div>
<div style="left:197px;top:202px;width:33px;text-align:center;font-size:13px;font-weight:bold;line-height:16px;white-space:nowrap">Ед.<br>изм<br>ере<br>ния</div>
<div style="left:231px;top:210px;width:47px;text-align:center;font-size:13px;font-weight:bold;line-height:16px;white-space:nowrap">Закуп<br>очная<br>цена</div>
<div style="left:279px;top:194px;width:60px;text-align:center;font-size:13px;font-weight:bold;line-height:16px;white-space:nowrap">Закупоч<br>ная<br>цена<br>усредне<br>нная</div>
<div style="left:340px;top:210px;width:67px;text-align:center;font-size:13px;font-weight:bold;line-height:16px;white-space:nowrap">Отпускна<br>я цена,<br>цена1</div>
<div style="left:408px;top:202px;width:75px;text-align:center;font-size:13px;font-weight:bold;line-height:16px;white-space:nowrap">Отпускная<br>цена<br>усредненн<br>ая</div>
<div style="left:484px;top:210px;width:63px;text-align:center;font-size:13px;font-weight:bold;line-height:16px;white-space:nowrap">Отпускн<br>ая цена,<br>цена2</div>
<div style="left:548px;top:194px;width:63px;text-align:center;font-size:13px;font-weight:bold;line-height:16px;white-space:nowrap">Цена по<br>факту<br>12%,<br>усредне<br>нная</div>
<div class="t" style="left:71px;top:279px;font-size:13px;font-weight:bold;text-decoration:underline">ТМ <i>Росичи</i>&nbsp;</div>
<div class="t" style="left:279px;top:279px;width:60px;text-align:center;font-size:13px">23.72</div>
<div class="t" style="left:408px;top:279px;width:75px;text-align:center;font-size:13px">26.35</div>
<div class="t" style="left:548px;top:279px;width:63px;text-align:center;font-size:13px">26.56</div>
<div style="left:69px;top:296px;width:127px;height:15px;overflow:hidden"><div class="t" style="left:2px;top:0;font-size:13px">Абрикос с орехом</div></div>
<div class="t" style="left:197px;top:296px;width:33px;text-align:center;font-size:13px">грн.</div>
<div class="t" style="left:231px;top:296px;width:47px;text-align:center;font-size:13px">30.20</div>
<div class="t" style="left:340px;top:296px;width:67px;text-align:center;font-size:13px">33.55</div>
<div class="t" style="left:484px;top:296px;width:63px;text-align:center;font-size:13px">33.82</div>
<div style="left:69px;top:313px;width:127px;height:15px;overflow:hidden"><div class="t" style="left:2px;top:0;font-size:13px">Желейная с орехом и изюмом</div></div>
<div class="t" style="left:197px;top:313px;width:33px;text-align:center;font-size:13px">грн.</div>
<div class="t" style="left:231px;top:313px;width:47px;text-align:center;font-size:13px">14.48</div>
<div class="t" style="left:340px;top:313px;width:67px;text-align:center;font-size:13px">16.09</div>
<div class="t" style="left:484px;top:313px;width:63px;text-align:center;font-size:13px">16.22</div>
<div style="left:69px;top:330px;width:127px;height:15px;overflow:hidden"><div class="t" style="left:2px;top:0;font-size:13px">Желейная с орехом и изюмом</div></div>
<div class="t" style="left:197px;top:330px;width:33px;text-align:center;font-size:13px">грн.</div>
<div class="t" style="left:231px;top:330px;width:47px;text-align:center;font-size:13px">14.48</div>
<div class="t" style="left:340px;top:330px;width:67px;text-align:center;font-size:13px">16.09</div>
<div class="t" style="left:484px;top:330px;width:63px;text-align:center;font-size:13px">16.22</div>
<div style="left:69px;top:347px;width:127px;height:15px;overflow:hidden"><div class="t" style="left:2px;top:0;font-size:13px">Лесовик</div></div>
<div class="t" style="left:197px;top:347px;width:33px;text-align:center;font-size:13px">грн.</div>
<div class="t" style="left:231px;top:347px;width:47px;text-align:center;font-size:13px">32.95</div>
<div class="t" style="left:340px;top:347px;width:67px;text-align:center;font-size:13px">36.61</div>
<div class="t" style="left:484px;top:347px;width:63px;text-align:center;font-size:13px">36.90</div>
<div style="left:69px;top:364px;width:127px;height:15px;overflow:hidden"><div class="t" style="left:2px;top:0;font-size:13px">Праздничный десерт</div></div>
<div class="t" style="left:197px;top:364px;width:33px;text-align:center;font-size:13px">грн.</div>
<div class="t" style="left:231px;top:364px;width:47px;text-align:center;font-size:13px">24.01</div>
<div class="t" style="left:340px;top:364px;width:67px;text-align:center;font-size:13px">26.68</div>
<div class="t" style="left:484px;top:364px;width:63px;text-align:center;font-size:13px">26.89</div>
<div style="left:69px;top:381px;width:127px;height:15px;overflow:hidden"><div class="t" style="left:2px;top:0;font-size:13px">Чернослив с орехом</div></div>
<div class="t" style="left:197px;top:381px;width:33px;text-align:center;font-size:13px">грн.</div>
<div class="t" style="left:231px;top:381px;width:47px;text-align:center;font-size:13px">26.17</div>
<div class="t" style="left:340px;top:381px;width:67px;text-align:center;font-size:13px">29.08</div>
<div class="t" style="left:484px;top:381px;width:63px;text-align:center;font-size:13px">29.31</div>
<div class="t" style="left:71px;top:398px;font-size:13px;font-weight:bold;text-decoration:underline">ТМ <i>Киевград</i>&nbsp;</div>
<div class="t" style="left:279px;top:398px;width:60px;text-align:center;font-size:13px">17.47</div>
<div class="t" style="left:408px;top:398px;width:75px;text-align:center;font-size:13px">19.41</div>
<div class="t" style="left:548px;top:398px;width:63px;text-align:center;font-size:13px">19.57</div>
<div style="left:69px;top:415px;width:127px;height:15px;overflow:hidden"><div class="t" style="left:2px;top:0;font-size:13px">Божья коровка</div></div>
<div class="t" style="left:197px;top:415px;width:33px;text-align:center;font-size:13px">грн.</div>
<div class="t" style="left:231px;top:415px;width:47px;text-align:center;font-size:13px">13.64</div>
<div class="t" style="left:340px;top:415px;width:67px;text-align:center;font-size:13px">15.15</div>
<div class="t" style="left:484px;top:415px;width:63px;text-align:center;font-size:13px">15.27</div>
<div style="left:69px;top:432px;width:127px;height:15px;overflow:hidden"><div class="t" style="left:2px;top:0;font-size:13px">Карат</div></div>
<div class="t" style="left:197px;top:432px;width:33px;text-align:center;font-size:13px">грн.</div>
<div class="t" style="left:231px;top:432px;width:47px;text-align:center;font-size:13px">21.98</div>
<div class="t" style="left:340px;top:432px;width:67px;text-align:center;font-size:13px">24.42</div>
<div class="t" style="left:484px;top:432px;width:63px;text-align:center;font-size:13px">24.62</div>
<div style="left:69px;top:449px;width:127px;height:15px;overflow:hidden"><div class="t" style="left:2px;top:0;font-size:13px">Киевские зори</div></div>
<div class="t" style="left:197px;top:449px;width:33px;text-align:center;font-size:13px">грн.</div>
<div class="t" style="left:231px;top:449px;width:47px;text-align:center;font-size:13px">26.73</div>
<div class="t" style="left:340px;top:449px;width:67px;text-align:center;font-size:13px">29.7</div>
<div class="t" style="left:484px;top:449px;width:63px;text-align:center;font-size:13px">29.94</div>
<div style="left:69px;top:466px;width:127px;height:15px;overflow:hidden"><div class="t" style="left:2px;top:0;font-size:13px">Метеорит звездный</div></div>
<div class="t" style="left:197px;top:466px;width:33px;text-align:center;font-size:13px">грн.</div>
<div class="t" style="left:231px;top:466px;width:47px;text-align:center;font-size:13px">19.40</div>
<div class="t" style="left:340px;top:466px;width:67px;text-align:center;font-size:13px">21.56</div>
<div class="t" style="left:484px;top:466px;width:63px;text-align:center;font-size:13px">21.73</div>
<div style="left:69px;top:483px;width:127px;height:15px;overflow:hidden"><div class="t" style="left:2px;top:0;font-size:13px">Премьера Киевская</div></div>
<div class="t" style="left:197px;top:483px;width:33px;text-align:center;font-size:13px">грн.</div>
<div class="t" style="left:231px;top:483px;width:47px;text-align:center;font-size:13px">14.16</div>
<div class="t" style="left:340px;top:483px;width:67px;text-align:center;font-size:13px">15.73</div>
<div class="t" style="left:484px;top:483px;width:63px;text-align:center;font-size:13px">15.86</div>
<div style="left:69px;top:500px;width:127px;height:15px;overflow:hidden"><div class="t" style="left:2px;top:0;font-size:13px">Свет Прометея</div></div>
<div class="t" style="left:197px;top:500px;width:33px;text-align:center;font-size:13px">грн.</div>
<div class="t" style="left:231px;top:500px;width:47px;text-align:center;font-size:13px">20.69</div>
<div class="t" style="left:340px;top:500px;width:67px;text-align:center;font-size:13px">22.99</div>
<div class="t" style="left:484px;top:500px;width:63px;text-align:center;font-size:13px">23.17</div>
<div style="left:69px;top:517px;width:127px;height:15px;overflow:hidden"><div class="t" style="left:2px;top:0;font-size:13px">Солнечная изюминка</div></div>
<div class="t" style="left:197px;top:517px;width:33px;text-align:center;font-size:13px">грн.</div>
<div class="t" style="left:231px;top:517px;width:47px;text-align:center;font-size:13px">21.98</div>
<div class="t" style="left:340px;top:517px;width:67px;text-align:center;font-size:13px">24.42</div>
<div class="t" style="left:484px;top:517px;width:63px;text-align:center;font-size:13px">24.62</div>
</div>
<div style="left:28px;top:130px;width:42px;height:63px;border:2px solid #663300;border-right-width:3px;border-bottom-width:3px"></div>
<div style="left:66px;top:189px;width:6px;height:6px;background:#99ccff"></div>
<div style="left:67px;top:190px;width:4px;height:4px;background:#663300"></div>
<div style="left:69px;top:192px;width:2px;height:2px;background:#fff"></div>
<div style="left:29px;top:138px;width:101px;height:39px;background:#c0c0c0;box-shadow:inset -1px -1px #000,inset 1px 1px #fff,inset -2px -2px #808080"></div>
<div class="t" style="left:37px;top:151px;font-size:13px">Главное меню</div>
<div style="left:109px;top:110px;width:16px;height:2px;background:#000"></div>
<div style="left:110px;top:90px;width:40px;height:19px;background:#ffffe1;border:1px solid #000"></div>
<div class="t" style="left:113px;top:94px;font-size:11px;letter-spacing:0.1px">Шрифт</div>
<div class="rb" style="left:783px;top:113px;width:15px;height:5px;"></div>
<div style="left:783px;top:118px;width:15px;height:1px;background:#000"></div>
<div class="rb" style="left:783px;top:119px;width:15px;height:15px;"></div>
<svg style="left:787px;top:124px;" width="7" height="4" viewBox="0 0 7 4" shape-rendering="crispEdges"><path d="M3 0h1v1h1v1h1v1h1v1H0V3h1V2h1V1h1z" fill="#000"/></svg>
<div style="left:783px;top:134px;width:15px;height:1px;background:#000"></div>
<div class="rb" style="left:783px;top:135px;width:15px;height:100px;"></div>
<div style="left:783px;top:235px;width:16px;height:278px;background-color:#fff;background-image:linear-gradient(45deg,#c0c0c0 25%,transparent 25%,transparent 75%,#c0c0c0 75%),linear-gradient(45deg,#c0c0c0 25%,transparent 25%,transparent 75%,#c0c0c0 75%);background-size:2px 2px;background-position:0 0,1px 1px"></div>
<div class="rb" style="left:783px;top:513px;width:15px;height:14px;"></div>
<svg style="left:787px;top:518px;" width="7" height="4" viewBox="0 0 7 4" shape-rendering="crispEdges"><path d="M0 0h7v1H6v1H5v1H4v1H3V3H2V2H1V1H0z" fill="#000"/></svg>
<div style="left:799px;top:113px;width:1px;height:430px;background:#fff"></div>
<div style="left:0px;top:527px;width:800px;height:16px;background:#c0c0c0"></div>
<div style="left:0px;top:527px;width:1px;height:15px;background:#808080"></div>
<div style="left:1px;top:527px;width:1px;height:15px;background:#000"></div>
<div style="left:2px;top:528px;width:15px;height:14px;background:#c0c0c0;box-shadow:inset 1px 1px #fff,inset -1px -1px #808080"></div>
<svg style="left:4px;top:531px;" width="9" height="9" viewBox="0 0 9 9" shape-rendering="crispEdges"><rect x="0" y="0" width="1" height="9" fill="#000"/><rect x="2" y="4" width="1" height="1" fill="#000"/><rect x="3" y="3" width="1" height="3" fill="#000"/><rect x="4" y="2" width="1" height="5" fill="#000"/><rect x="5" y="1" width="1" height="7" fill="#000"/><rect x="6" y="0" width="1" height="9" fill="#000"/></svg>
<div style="left:17px;top:528px;width:15px;height:14px;background:#c0c0c0;box-shadow:inset 1px 1px #fff,inset -1px -1px #808080"></div>
<svg style="left:22px;top:531px;" width="6" height="9" viewBox="0 0 6 9" shape-rendering="crispEdges"><rect x="0" y="4" width="1" height="1" fill="#000"/><rect x="1" y="3" width="1" height="3" fill="#000"/><rect x="2" y="2" width="1" height="5" fill="#000"/><rect x="3" y="1" width="1" height="7" fill="#000"/><rect x="4" y="0" width="1" height="9" fill="#000"/></svg>
<div style="left:32px;top:528px;width:15px;height:14px;background:#c0c0c0;box-shadow:inset 1px 1px #fff,inset -1px -1px #808080"></div>
<svg style="left:37px;top:531px;" width="6" height="9" viewBox="0 0 6 9" shape-rendering="crispEdges"><rect x="4" y="4" width="1" height="1" fill="#000"/><rect x="3" y="3" width="1" height="3" fill="#000"/><rect x="2" y="2" width="1" height="5" fill="#000"/><rect x="1" y="1" width="1" height="7" fill="#000"/><rect x="0" y="0" width="1" height="9" fill="#000"/></svg>
<div style="left:47px;top:528px;width:15px;height:14px;background:#c0c0c0;box-shadow:inset 1px 1px #fff,inset -1px -1px #808080"></div>
<svg style="left:51px;top:531px;" width="9" height="9" viewBox="0 0 9 9" shape-rendering="crispEdges"><rect x="8" y="0" width="1" height="9" fill="#000"/><rect x="6" y="4" width="1" height="1" fill="#000"/><rect x="5" y="3" width="1" height="3" fill="#000"/><rect x="4" y="2" width="1" height="5" fill="#000"/><rect x="3" y="1" width="1" height="7" fill="#000"/><rect x="2" y="0" width="1" height="9" fill="#000"/></svg>
<div style="left:62px;top:527px;width:409px;height:16px;overflow:hidden;background:#c0c0c0">
<div style="left:0;top:0;width:409px;height:1px;background:#000"></div>
<svg style="left:0;top:0" width="420" height="16" viewBox="0 0 420 16"><path d="M370.5 0.5 L377.0 14.5 H415.5 L422 0.5Z" fill="#c0c0c0" stroke="none"/><path d="M371.7 0.5 L377.7 13.5" stroke="#fff" stroke-width="1" fill="none"/><path d="M370.5 0.5 L377.0 14.5 H415.5 L422 0.5" stroke="#000" stroke-width="1" fill="none"/><path d="M248 0.5 L254.5 14.5 H309.5 L316 0.5Z" fill="#c0c0c0" stroke="none"/><path d="M249.2 0.5 L255.2 13.5" stroke="#fff" stroke-width="1" fill="none"/><path d="M248 0.5 L254.5 14.5 H309.5 L316 0.5" stroke="#000" stroke-width="1" fill="none"/><path d="M183.5 0.5 L190.0 14.5 H249.0 L255.5 0.5Z" fill="#c0c0c0" stroke="none"/><path d="M184.7 0.5 L190.7 13.5" stroke="#fff" stroke-width="1" fill="none"/><path d="M183.5 0.5 L190.0 14.5 H249.0 L255.5 0.5" stroke="#000" stroke-width="1" fill="none"/><path d="M101 0.5 L107.5 14.5 H184.5 L191 0.5Z" fill="#c0c0c0" stroke="none"/><path d="M102.2 0.5 L108.2 13.5" stroke="#fff" stroke-width="1" fill="none"/><path d="M101 0.5 L107.5 14.5 H184.5 L191 0.5" stroke="#000" stroke-width="1" fill="none"/><path d="M0 0.5 L6.5 14.5 H102.0 L108.5 0.5Z" fill="#c0c0c0" stroke="none"/><path d="M1.2 0.5 L7.2 13.5" stroke="#fff" stroke-width="1" fill="none"/><path d="M0 0.5 L6.5 14.5 H102.0 L108.5 0.5" stroke="#000" stroke-width="1" fill="none"/><path d="M-60 0.5 L-53.5 14.5 H1.0 L7.5 0.5Z" fill="#c0c0c0" stroke="none"/><path d="M-58.8 0.5 L-52.8 13.5" stroke="#fff" stroke-width="1" fill="none"/><path d="M-60 0.5 L-53.5 14.5 H1.0 L7.5 0.5" stroke="#000" stroke-width="1" fill="none"/><path d="M308.5 0.5 L315.0 14.5 H371.5 L378 0.5Z" fill="#fff" stroke="none"/><path d="M308.5 0.5 L315.0 14.5 H371.5 L378 0.5" stroke="#000" stroke-width="1" fill="none"/><rect x="309.5" y="0" width="67.5" height="1.2" fill="#fff"/></svg>
<div class="t" style="left:0px;top:3px;width:108.5px;text-align:center;font-size:11px;font-weight:normal;letter-spacing:0.2px">Графичподсист</div>
<div class="t" style="left:101px;top:3px;width:90px;text-align:center;font-size:11px;font-weight:normal;letter-spacing:0.2px">Анализ З и П</div>
<div class="t" style="left:183.5px;top:3px;width:72.0px;text-align:center;font-size:11px;font-weight:normal;letter-spacing:0.2px">Продажи</div>
<div class="t" style="left:248px;top:3px;width:68px;text-align:center;font-size:11px;font-weight:normal;letter-spacing:0.2px">Закупки</div>
<div class="t" style="left:370.5px;top:3px;width:51.5px;text-align:center;font-size:11px;font-weight:normal;letter-spacing:0.2px">Инст</div>
<div class="t" style="left:308.5px;top:2px;width:69.5px;text-align:center;font-size:12px;font-weight:bold;letter-spacing:0.2px">База цен</div>
</div>
<div class="rb" style="left:471px;top:527px;width:5px;height:16px;"></div>
<div class="rb" style="left:476px;top:528px;width:15px;height:14px;"></div>
<svg style="left:481px;top:531px;" width="5" height="8" viewBox="0 0 5 8" shape-rendering="crispEdges"><path d="M4 0V8L0 4Z" fill="#000"/></svg>
<div class="rb" style="left:491px;top:528px;width:239px;height:14px;"></div>
<div style="left:730px;top:528px;width:33px;height:14px;background-color:#fff;background-image:linear-gradient(45deg,#c0c0c0 25%,transparent 25%,transparent 75%,#c0c0c0 75%),linear-gradient(45deg,#c0c0c0 25%,transparent 25%,transparent 75%,#c0c0c0 75%);background-size:2px 2px;background-position:0 0,1px 1px"></div>
<div class="rb" style="left:763px;top:528px;width:15px;height:14px;"></div>
<svg style="left:768px;top:531px;" width="5" height="8" viewBox="0 0 5 8" shape-rendering="crispEdges"><path d="M0 0V8L4 4Z" fill="#000"/></svg>
<div style="left:778px;top:527px;width:5px;height:16px;background:#c0c0c0;box-shadow:inset 1px 0 #000,inset -1px 0 #fff"></div>
<div style="left:783px;top:527px;width:15px;height:15px;background:#c0c0c0;box-shadow:inset 1px 1px #000"></div>
<div style="left:0px;top:542px;width:800px;height:1px;background:#808080"></div>
<div style="left:0px;top:543px;width:800px;height:1px;background:#fff"></div>
<div style="left:0px;top:544px;width:800px;height:28px;background:#c0c0c0"></div>
<div class="tb" style="left:0px;top:545px;width:595px;height:26px;"></div>
<div class="grip" style="left:3px;top:547px;width:6px;height:22px;"></div>
<div class="t" style="left:16px;top:552px;font-size:12px;font-weight:bold">Действия</div>
<div style="left:32px;top:564px;width:7px;height:1px;background:#000"></div>
<svg style="left:78px;top:557px;" width="5" height="3" viewBox="0 0 5 3" shape-rendering="crispEdges"><path d="M0 0h5v1h-1v1h-1v1h-1v-1h-1v-1h-1z" fill="#000"/></svg>
<svg style="left:95px;top:550px;" width="10" height="14" viewBox="0 0 10 14" shape-rendering="crispEdges"><path d="M0.5 0.5V12.5L3.5 9.5L6 13.5L7.5 12.5L5.5 8.5H9.5Z" fill="#fff" stroke="#000" shape-rendering="auto"/></svg>
<svg style="left:115px;top:551px;" width="14" height="14" viewBox="0 0 14 14" shape-rendering="crispEdges"><circle cx="7" cy="7" r="5" fill="none" stroke="#808080" stroke-width="2.5" shape-rendering="auto"/><circle cx="7" cy="7" r="1.5" fill="#808080"/><path d="M9 0L13 3L9 5Z" fill="#c0c0c0"/><path d="M10 3L13 0" stroke="#808080" stroke-width="1.5"/></svg>
<div style="left:136px;top:548px;width:1px;height:19px;background:#808080"></div>
<div style="left:137px;top:548px;width:1px;height:19px;background:#fff"></div>
<div class="t" style="left:145px;top:552px;font-size:12px;font-weight:bold;letter-spacing:-0.4px">Автофигуры</div>
<div style="left:190px;top:564px;width:6px;height:1px;background:#000"></div>
<svg style="left:222px;top:557px;" width="5" height="3" viewBox="0 0 5 3" shape-rendering="crispEdges"><path d="M0 0h5v1h-1v1h-1v1h-1v-1h-1v-1h-1z" fill="#000"/></svg>
<svg style="left:237px;top:551px;" width="12" height="12" viewBox="0 0 12 12" shape-rendering="crispEdges"><path d="M0.5 0.5L11.5 11.5" stroke="#000" shape-rendering="auto"/></svg>
<svg style="left:261px;top:551px;" width="12" height="12" viewBox="0 0 12 12" shape-rendering="crispEdges"><path d="M0.5 0.5L9 9" stroke="#000" shape-rendering="auto"/><path d="M11.5 11.5L5 9.5L9.5 5Z" fill="#000" shape-rendering="auto"/></svg>
<svg style="left:281px;top:550px;" width="17" height="14" viewBox="0 0 17 14" shape-rendering="crispEdges"><rect x="0.5" y="0.5" width="16" height="13" fill="none" stroke="#000"/></svg>
<svg style="left:303px;top:550px;" width="18" height="14" viewBox="0 0 18 14" shape-rendering="crispEdges"><ellipse cx="9" cy="7" rx="8.3" ry="6.3" fill="none" stroke="#000" shape-rendering="auto"/></svg>
<svg style="left:327px;top:550px;" width="16" height="15" viewBox="0 0 16 15" shape-rendering="crispEdges"><rect x="0.5" y="0.5" width="14" height="13" fill="#fff" stroke="#000"/><rect x="15" y="1" width="1" height="14" fill="#000"/><rect x="1" y="14" width="15" height="1" fill="#000"/><rect x="3" y="3" width="5" height="1" fill="#000"/><rect x="3" y="5" width="5" height="1" fill="#000"/><rect x="9" y="2" width="3" height="4" fill="#000"/><rect x="3" y="7" width="9" height="1" fill="#000"/><rect x="3" y="9" width="9" height="1" fill="#000"/><rect x="3" y="11" width="9" height="1" fill="#000"/></svg>
<div class="t" style="left:349px;top:548px;font-family:'Liberation Serif',serif;font-size:19px;font-weight:bold;font-style:italic;color:#0000a0">A</div>
<div style="left:362px;top:551px;width:2px;height:13px;background:#808080"></div>
<div style="left:372px;top:548px;width:1px;height:19px;background:#808080"></div>
<div style="left:373px;top:548px;width:1px;height:19px;background:#fff"></div>
<svg style="left:379px;top:548px;" width="17" height="18" viewBox="0 0 17 18" shape-rendering="crispEdges"><path d="M3 7L8 3L13 8L8 13Z" fill="#fff" stroke="#000" stroke-width="0.9" shape-rendering="auto"/><path d="M8 3V1M6 2Q8 0 10 2" fill="none" stroke="#000" stroke-width="0.9"/><path d="M12 5Q15 6 15 10L14 10L13 8Z" fill="#000080" shape-rendering="auto"/><rect x="0" y="14" width="16" height="4" fill="#ffff00"/></svg>
<svg style="left:400px;top:557px;" width="5" height="3" viewBox="0 0 5 3" shape-rendering="crispEdges"><path d="M0 0h5v1h-1v1h-1v1h-1v-1h-1v-1h-1z" fill="#000"/></svg>
<svg style="left:413px;top:548px;" width="17" height="18" viewBox="0 0 17 18" shape-rendering="crispEdges"><path d="M4 12L13 3L15 1L14 4L6 12Z" fill="#000" shape-rendering="auto"/><path d="M13 2L15 0L16 1L14 3Z" fill="#ffff00"/><rect x="1" y="12" width="4" height="1" fill="#000080"/><rect x="0" y="14" width="16" height="4" fill="#0000ff"/></svg>
<svg style="left:435px;top:557px;" width="5" height="3" viewBox="0 0 5 3" shape-rendering="crispEdges"><path d="M0 0h5v1h-1v1h-1v1h-1v-1h-1v-1h-1z" fill="#000"/></svg>
<div class="t" style="left:446px;top:548px;font-family:'Liberation Serif',serif;font-size:15px;font-weight:bold;color:#000080">A</div>
<div style="left:447px;top:562px;width:17px;height:4px;background:#ff0000"></div>
<svg style="left:470px;top:557px;" width="5" height="3" viewBox="0 0 5 3" shape-rendering="crispEdges"><path d="M0 0h5v1h-1v1h-1v1h-1v-1h-1v-1h-1z" fill="#000"/></svg>
<svg style="left:481px;top:551px;" width="16" height="12" viewBox="0 0 16 12" shape-rendering="crispEdges"><rect x="0" y="0" width="15" height="1" fill="#000"/><rect x="0" y="3" width="15" height="2" fill="#000"/><rect x="0" y="7" width="15" height="3" fill="#000"/></svg>
<svg style="left:504px;top:551px;" width="16" height="12" viewBox="0 0 16 12" shape-rendering="crispEdges"><path d="M0 1h2M3 1h2M6 1h2M9 1h2M12 1h3M0 4h1M2 4h1M4 4h1M6 4h1M8 4h1M10 4h1M12 4h1M14 4h1M0 7h3M4 7h3M8 7h3M12 7h3M0 10h1M2 10h1M4 10h1M6 10h1M8 10h1M10 10h1M12 10h1M14 10h1" stroke="#000" fill="none"/></svg>
<svg style="left:528px;top:550px;" width="16" height="15" viewBox="0 0 16 15" shape-rendering="crispEdges"><rect x="1" y="3" width="14" height="1" fill="#000"/><path d="M11 0L15 3.5L11 7" fill="none" stroke="#000"/><rect x="1" y="10" width="14" height="1" fill="#000"/><path d="M5 7L1 10.5L5 14" fill="none" stroke="#000"/></svg>
<svg style="left:551px;top:550px;" width="15" height="15" viewBox="0 0 15 15" shape-rendering="crispEdges"><rect x="2" y="2" width="12" height="12" fill="#808080"/><rect x="0.5" y="0.5" width="11" height="11" fill="#008080" stroke="#000"/></svg>
<svg style="left:573px;top:550px;" width="16" height="16" viewBox="0 0 16 16" shape-rendering="crispEdges"><path d="M0.5 4.5L4.5 0.5H15.5V11.5L11.5 15.5H0.5Z" fill="#fff" stroke="#000"/><rect x="1" y="5" width="10" height="10" fill="#008080" stroke="#000" stroke-width="0.8"/><path d="M11 5L15 1V11L11 15Z" fill="#c0c0c0"/></svg>
<div style="left:0px;top:572px;width:800px;height:28px;background:#c0c0c0;border-top:1px solid #fff"></div>
<div class="rb" style="left:2px;top:576px;width:55px;height:22px;"></div>
<svg style="left:5px;top:579px;" width="18" height="16" viewBox="0 0 18 16" shape-rendering="crispEdges"><path d="M8 2Q11 0 14 2Q17 4 20 2V13Q17 15 14 13Q11 11 8 13Z" fill="#000" transform="translate(-2,0)"/><path d="M7 3Q9 2 11 3V7Q9 6 7 7Z" fill="#ff0000"/><path d="M12 3Q14 4 16 3V7Q14 8 12 7Z" fill="#00c000"/><path d="M7 8Q9 7 11 8V12Q9 11 7 12Z" fill="#0000ff"/><path d="M12 8Q14 9 16 8V12Q14 13 12 12Z" fill="#ffff00"/><path d="M1 4h1M3 4h2M1 6h1M3 6h2M1 9h1M3 9h2M1 11h1M3 11h2" stroke="#ff0000" shape-rendering="crispEdges"/><path d="M1 6h1M3 6h2M1 11h1M3 11h2" stroke="#0000ff" shape-rendering="crispEdges"/></svg>
<div class="t" style="left:24px;top:581px;font-size:12px;font-weight:bold">Пуск</div>
<div style="left:59px;top:575px;width:1px;height:24px;background:#808080"></div>
<div style="left:60px;top:575px;width:1px;height:24px;background:#fff"></div>
<div style="left:64px;top:578px;width:3px;height:19px;background:#c0c0c0;box-shadow:inset 1px 1px #fff,inset -1px -1px #808080"></div>
<svg style="left:74px;top:578px;" width="16" height="16" viewBox="0 0 16 16" shape-rendering="crispEdges"><circle cx="8" cy="9" r="6" fill="#3060e0" shape-rendering="auto"/><circle cx="8" cy="9" r="3.2" fill="#c0c0c0" shape-rendering="auto"/><rect x="4" y="8" width="8" height="1.6" fill="#3060e0"/><rect x="9" y="10" width="5" height="2.5" fill="#c0c0c0"/><path d="M2 13Q0 7 8 3Q15 0 15 3" fill="none" stroke="#2040a0" stroke-width="1.3" shape-rendering="auto"/><path d="M5 14Q10 15 13 11" fill="none" stroke="#80a0ff" stroke-width="1" shape-rendering="auto"/></svg>
<svg style="left:97px;top:578px;" width="16" height="16" viewBox="0 0 16 16" shape-rendering="crispEdges"><circle cx="7" cy="7" r="6.5" fill="#c0c0c0" stroke="#404040" stroke-width="0.8" shape-rendering="auto"/><path d="M7 7L2 3A6 6 0 0 1 12 2Z" fill="#80ff00"/><circle cx="7" cy="7" r="2" fill="#fff" stroke="#000" stroke-width="0.6"/><rect x="7" y="8" width="9" height="8" fill="#808080" stroke="#000" stroke-width="0.8"/><rect x="9" y="10" width="2" height="5" fill="#c0c0c0"/><rect x="12" y="10" width="2" height="5" fill="#c0c0c0"/></svg>
<svg style="left:120px;top:578px;" width="16" height="16" viewBox="0 0 16 16" shape-rendering="crispEdges"><rect x="0.5" y="3.5" width="15" height="9" fill="#008080" stroke="#000"/><rect x="3" y="5" width="10" height="2" fill="#fff"/><path d="M3 9h1M5 9h1M7 9h1M9 9h1M11 9h1M3 11h10" stroke="#000"/></svg>
<svg style="left:143px;top:578px;" width="16" height="16" viewBox="0 0 16 16" shape-rendering="crispEdges"><rect x="0" y="0" width="16" height="15" fill="#00ffff"/><rect x="1" y="1" width="6" height="13" fill="#0000ff"/><rect x="9" y="1" width="6" height="13" fill="#0000ff"/><rect x="2" y="3" width="4" height="1" fill="#ffff00"/><rect x="10" y="3" width="4" height="1" fill="#ffff00"/><path d="M1 15.5h1M3 15.5h1M5 15.5h1M7 15.5h1M9 15.5h1M11 15.5h1M13 15.5h1" stroke="#000"/></svg>
<svg style="left:166px;top:578px;" width="16" height="16" viewBox="0 0 16 16" shape-rendering="crispEdges"><path d="M8 0L16 8L8 16L0 8Z" fill="#808080" stroke="#000" stroke-width="0.8"/><path d="M8 2L14 8L8 14L2 8Z" fill="#ff9900"/><path d="M4 11L12 5" stroke="#fff" stroke-width="1.5"/></svg>
<svg style="left:189px;top:578px;" width="16" height="16" viewBox="0 0 16 16" shape-rendering="crispEdges"><rect x="0" y="0" width="15" height="15" fill="#0000ff" stroke="#000" stroke-width="0.8"/><rect x="2" y="7" width="11" height="7" fill="#fff"/><rect x="2" y="9" width="11" height="1.5" fill="#ff0000"/><rect x="2" y="12" width="11" height="1.5" fill="#ff0000"/><rect x="4" y="1" width="7" height="4" fill="#0000c0"/><rect x="9" y="1" width="2" height="3" fill="#fff"/></svg>
<svg style="left:212px;top:578px;" width="16" height="16" viewBox="0 0 16 16" shape-rendering="crispEdges"><path d="M0 1H4L6 8L11 1H15L8 10V16H4L0 4Z" fill="#e00000"/><path d="M9 10L14 15M14 11V15H10" stroke="#000" stroke-width="2" fill="none"/></svg>
<svg style="left:235px;top:578px;" width="16" height="16" viewBox="0 0 16 16" shape-rendering="crispEdges"><rect x="0.5" y="0.5" width="15" height="15" fill="#c0c0c0" stroke="#000"/><rect x="2" y="2" width="12" height="11" fill="#000"/><rect x="7" y="4" width="2" height="4" fill="#ff0000"/><rect x="7" y="9" width="2" height="2" fill="#ff0000"/></svg>
<svg style="left:258px;top:578px;" width="16" height="16" viewBox="0 0 16 16" shape-rendering="crispEdges"><rect x="3" y="1" width="13" height="11" fill="#c0e0ff" stroke="#000080" stroke-width="0.8"/><circle cx="9" cy="6" r="3.5" fill="#e0ffff" stroke="#008080" shape-rendering="auto"/><path d="M6 9L1 15" stroke="#ff8000" stroke-width="2"/><rect x="3" y="1" width="4" height="2" fill="#0000c0"/></svg>
<svg style="left:281px;top:578px;" width="16" height="16" viewBox="0 0 16 16" shape-rendering="crispEdges"><path d="M8 1L14 6H2Z" fill="#00c000"/><path d="M8 15L14 10H2Z" fill="#00c000"/><rect x="0" y="7" width="16" height="2" fill="#000080"/></svg>
<svg style="left:304px;top:578px;" width="16" height="16" viewBox="0 0 16 16" shape-rendering="crispEdges"><rect x="1" y="4" width="14" height="10" fill="#ffffc0" stroke="#000" stroke-width="0.8"/><rect x="11" y="5" width="3" height="3" fill="#ff0000"/><path d="M4 7Q8 1 12 5M12 9Q8 15 4 11" fill="none" stroke="#0000ff" stroke-width="2" shape-rendering="auto"/></svg>
<div style="left:332px;top:575px;width:1px;height:24px;background:#808080"></div>
<div style="left:333px;top:575px;width:1px;height:24px;background:#fff"></div>
<div style="left:336px;top:578px;width:3px;height:18px;background:#c0c0c0;box-shadow:inset 1px 1px #fff,inset -1px -1px #808080"></div>
<div class="rb" style="left:343px;top:576px;width:85px;height:22px;"></div>
<svg style="left:347px;top:580px;" width="15" height="15" viewBox="0 0 15 15" shape-rendering="crispEdges"><rect x="0" y="0" width="15" height="15" fill="#0000ff" stroke="#000" stroke-width="0.8"/><rect x="2" y="7" width="11" height="7" fill="#fff"/><rect x="2" y="9" width="11" height="1.5" fill="#ff0000"/><rect x="2" y="12" width="11" height="1.5" fill="#ff0000"/><rect x="4" y="1" width="7" height="4" fill="#0000c0"/><rect x="9" y="1" width="2" height="3" fill="#fff"/></svg>
<div class="t" style="left:366px;top:582px;font-size:11px;letter-spacing:0.2px">Total Com...</div>
<div style="left:431px;top:576px;width:85px;height:22px;background-color:#fff;background-image:linear-gradient(45deg,#c0c0c0 25%,transparent 25%,transparent 75%,#c0c0c0 75%),linear-gradient(45deg,#c0c0c0 25%,transparent 25%,transparent 75%,#c0c0c0 75%);background-size:2px 2px;background-position:0 0,1px 1px;box-shadow:inset 1px 1px #000,inset -1px -1px #fff,inset 2px 2px #808080"></div>
<svg style="left:435px;top:580px;" width="17" height="14" viewBox="0 0 17 14" shape-rendering="crispEdges"><path d="M10.5 1.5H15.5L6.5 12.5H1.5Z" fill="#008080" stroke="#000"/><path d="M3 11.5H8" stroke="#c0c0c0"/><path d="M1.5 1.5H6.5L15.5 12.5H10.5Z" fill="#00ffff" stroke="#000"/><path d="M2 2H6" stroke="#fff"/></svg>
<div class="t" style="left:455px;top:582px;font-size:12px;font-weight:bold">Microsof...</div>
<div class="rb" style="left:519px;top:576px;width:85px;height:22px;"></div>
<svg style="left:523px;top:579px;shape-rendering:auto" width="17" height="16" viewBox="0 0 17 16" shape-rendering="crispEdges"><text x="0" y="13" font-family="Liberation Serif" font-size="16" font-weight="bold" font-style="italic" fill="#00ffff" stroke="#000" stroke-width="1.2" paint-order="stroke" textLength="17" lengthAdjust="spacingAndGlyphs">W</text></svg>
<div class="t" style="left:541px;top:582px;font-size:11px;letter-spacing:0.2px">Microsoft ...</div>
<div style="left:613px;top:575px;width:1px;height:24px;background:#808080"></div>
<div style="left:614px;top:575px;width:1px;height:24px;background:#fff"></div>
<div style="left:617px;top:576px;width:181px;height:22px;box-shadow:inset 1px 1px #808080,inset -1px -1px #fff"></div>
<div style="left:620px;top:579px;width:17px;height:16px;background:#000080"></div>
<div class="t" style="left:621px;top:581px;font-size:12px;color:#fff;font-weight:bold;letter-spacing:0.5px">En</div>
<svg style="left:637px;top:579px;" width="17" height="16" viewBox="0 0 17 16" shape-rendering="crispEdges"><rect x="3" y="2" width="11" height="12" fill="#c0c0c0" stroke="#000" stroke-width="0.8"/><path d="M0 4h3M0 8h3M0 12h3M14 4h3M14 8h3" stroke="#000" stroke-dasharray="1 1"/><rect x="5" y="4" width="7" height="8" fill="#fff" stroke="#808080" stroke-width="0.6"/></svg>
<svg style="left:655px;top:579px;" width="17" height="16" viewBox="0 0 17 16" shape-rendering="crispEdges"><path d="M1 5H4L9 1V15L4 11H1Z" fill="#ffff80" stroke="#000" stroke-width="0.8"/><path d="M11 5L15 3M11 8H16M11 11L15 13" stroke="#808080"/></svg>
<svg style="left:673px;top:579px;" width="17" height="16" viewBox="0 0 17 16" shape-rendering="crispEdges"><text x="7" y="6" font-family="Liberation Sans" font-size="7" font-weight="bold">A</text><path d="M15 1L6 12" stroke="#000" stroke-width="1.5"/><path d="M2 12H9V15H2Z" fill="#c0c0c0" stroke="#000" stroke-width="0.8"/></svg>
<svg style="left:690px;top:579px;" width="16" height="16" viewBox="0 0 16 16" shape-rendering="crispEdges"><circle cx="4" cy="9" r="3" fill="#fff" stroke="#000" shape-rendering="auto"/><circle cx="11" cy="9" r="3" fill="#fff" stroke="#000" shape-rendering="auto"/><circle cx="4" cy="10" r="1" fill="#000"/><circle cx="11" cy="10" r="1" fill="#000"/><path d="M1 5Q4 3 7 5M8 5Q11 3 14 5" fill="none" stroke="#000"/></svg>
<svg style="left:706px;top:579px;" width="17" height="16" viewBox="0 0 17 16" shape-rendering="crispEdges"><circle cx="8" cy="8" r="7.5" fill="#0000ff" stroke="#000" stroke-width="0.6" shape-rendering="auto"/><path d="M4 2Q10 0 13 4L11 7L12 11L8 14L6 9L2 7Z" fill="#00a000" shape-rendering="auto"/><rect x="9" y="8" width="8" height="8" fill="#fff" stroke="#000" stroke-width="0.6"/><path d="M10 15L16 9" stroke="#ff0000" stroke-width="2"/></svg>
<svg style="left:723px;top:579px;" width="16" height="16" viewBox="0 0 16 16" shape-rendering="crispEdges"><rect x="0.5" y="0.5" width="15" height="15" fill="#c0c0c0" stroke="#000"/><rect x="2" y="2" width="12" height="11" fill="#000"/><rect x="7" y="4" width="2" height="4" fill="#ff0000"/><rect x="7" y="9" width="2" height="2" fill="#ff0000"/></svg>
<svg style="left:739px;top:578px;" width="17" height="17" viewBox="0 0 17 17" shape-rendering="crispEdges"><text x="0" y="9" font-family="Liberation Serif" font-size="11" font-weight="bold" font-style="italic" fill="#ff0000" textLength="16" lengthAdjust="spacingAndGlyphs">SOS</text><path d="M1 11H15" stroke="#ffff00" stroke-width="2"/><path d="M4 8L9 11L7 14" stroke="#000" fill="none"/><path d="M2 15h2M7 15h2M12 15h2" stroke="#0000ff" stroke-width="2"/></svg>
<div class="t" style="left:763px;top:582px;font-size:11px;letter-spacing:0.3px">10:18</div>
</body></html>
